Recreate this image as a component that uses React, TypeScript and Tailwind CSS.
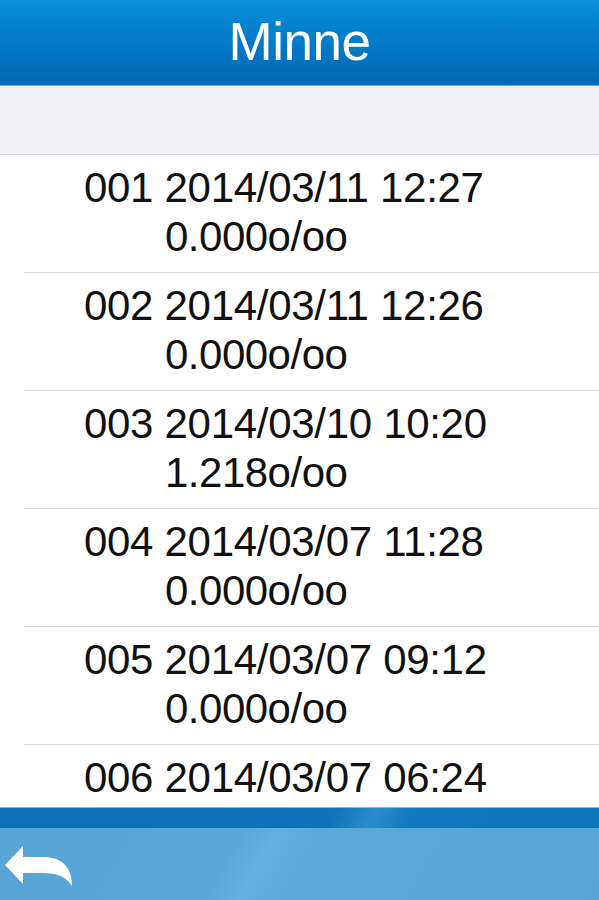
import React from "react";

const rows = [
  { id: "001", dt: "2014/03/11 12:27", v: "0.000o/oo" },
  { id: "002", dt: "2014/03/11 12:26", v: "0.000o/oo" },
  { id: "003", dt: "2014/03/10 10:20", v: "1.218o/oo" },
  { id: "004", dt: "2014/03/07 11:28", v: "0.000o/oo" },
  { id: "005", dt: "2014/03/07 09:12", v: "0.000o/oo" },
  { id: "006", dt: "2014/03/07 06:24", v: "0.000o/oo" },
];

export default function App() {
  return (
    <div
      className="w-[599px] h-[900px] flex flex-col overflow-hidden bg-white"
      style={{ fontFamily: '"Liberation Sans", Arial, sans-serif' }}
    >
      <div className="h-[85px] shrink-0 flex items-center justify-center bg-gradient-to-b from-[#0a8edb] to-[#0067b4]">
        <span className="text-white text-[53px] leading-none tracking-[-0.5px] -mt-[2px]">Minne</span>
      </div>
      <div className="h-[1px] shrink-0 bg-[#5aaee6]" />
      <div className="h-[69px] shrink-0 bg-[#efeff4] border-b border-[#d6d6da]" />
      <div className="flex-1 overflow-hidden">
        {rows.map((r) => (
          <div key={r.id} className="ml-[24px] border-b border-[#d9d9d9] pt-[8px] pb-[11px] text-[#111]">
            <div className="pl-[60px] text-[42px] leading-[49px] tracking-[-0.3px] whitespace-nowrap">
              {r.id} {r.dt}
            </div>
            <div className="pl-[141px] text-[42px] leading-[49px] tracking-[-0.5px] whitespace-nowrap">
              {r.v}
            </div>
          </div>
        ))}
      </div>
      <div className="h-[93px] shrink-0 flex flex-col">
        <div className="h-[21px] shrink-0 border-t border-[#6dbbe8] bg-[linear-gradient(115deg,#0f71b8_0%,#0f72b9_55%,#2a8ccc_62%,#127ac0_68%,#1076bc_100%)]" />
        <div className="flex-1 flex items-center bg-[linear-gradient(120deg,#57a5d6_0%,#58a7d8_38%,#62b1e0_44%,#5aa9da_50%,#57a6d7_100%)]">
          <svg width="72" height="46" viewBox="0 0 72 46" className="ml-[3px] mt-[2px]">
            <path
              d="M2 23 L20 4 L20 15 L40 15 C58 15 69 24 69 44 C63 35 55 31 40 31 L20 31 L20 42 Z"
              fill="white"
            />
          </svg>
        </div>
      </div>
    </div>
  );
}
